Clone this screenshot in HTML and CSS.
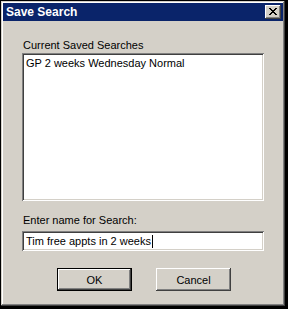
FILE: index.html
```html
<!DOCTYPE html>
<html lang="en">
<head>
    <meta charset="UTF-8">
    <title>Save Search</title>
    <link rel="stylesheet" href="styles.css">
</head>
<body>
    <div class="window">
        <div class="titlebar">
            <span class="title">Save Search</span>
            <div class="close-btn">
                <svg width="8" height="7" viewBox="0 0 8 7">
                    <path d="M0 0h2v1h1v1h2v-1h1v-1h2v1h-1v1h-1v1h-1v1h1v1h1v1h1v1h-2v-1h-1v-1h-2v1h-1v1h-2v-1h1v-1h1v-1h1v-1h-1v-1h-1v-1h-1z" fill="#000"/>
                </svg>
            </div>
        </div>
        <div class="content">
            <div class="label">Current Saved Searches</div>
            <div class="listbox">
                <div class="list-item">GP 2 weeks Wednesday Normal</div>
            </div>
            <div class="label label-name">Enter name for Search:</div>
            <div class="textbox">Tim free appts in 2 weeks<span class="caret"></span></div>
            <div class="buttons">
                <div class="btn btn-default">OK</div>
                <div class="btn">Cancel</div>
            </div>
        </div>
    </div>
</body>
</html>
```

FILE: styles.css
```css
body {
    margin: 0;
    padding: 0;
    background: #000;
    width: 288px;
    height: 309px;
    overflow: hidden;
    font-family: 'Liberation Sans', Arial, sans-serif;
    font-size: 11px;
    color: #000;
}
.window {
    margin: 1px 0 0 1px;
    width: 284px;
    height: 305px;
    box-sizing: border-box;
    padding: 2px;
    background: #d4d0c8;
    box-shadow: inset -1px -1px #404040, inset 1px 1px #d4d0c8, inset -2px -2px #808080, inset 2px 2px #ffffff;
    display: flex;
    flex-direction: column;
}
.titlebar {
    height: 18px;
    background: #0a246a;
    display: flex;
    align-items: center;
    justify-content: space-between;
    padding: 0 2px 0 3px;
}
.title {
    color: #fff;
    font-weight: bold;
    font-size: 12px;
}
.close-btn {
    width: 16px;
    height: 14px;
    box-sizing: border-box;
    background: #d4d0c8;
    box-shadow: inset -1px -1px #404040, inset 1px 1px #ffffff, inset -2px -2px #808080, inset 2px 2px #d4d0c8;
    display: flex;
    align-items: center;
    justify-content: center;
    padding: 0 1px 1px 0;
}
.close-btn svg {
    display: block;
}
.content {
    flex: 1;
    padding: 18px 19px 0 19px;
    display: flex;
    flex-direction: column;
}
.label {
    line-height: 13px;
    height: 13px;
    padding-left: 1px;
}
.listbox {
    margin-top: 1px;
    width: 242px;
    height: 148px;
    box-sizing: border-box;
    background: #fff;
    box-shadow: inset 1px 1px #808080, inset -1px -1px #ffffff, inset 2px 2px #404040, inset -2px -2px #d4d0c8;
    padding: 4px 4px;
}
.list-item {
    line-height: 13px;
}
.label-name {
    margin-top: 13px;
}
.textbox {
    margin-top: 4px;
    width: 242px;
    height: 20px;
    box-sizing: border-box;
    background: #fff;
    box-shadow: inset 1px 1px #808080, inset -1px -1px #ffffff, inset 2px 2px #404040, inset -2px -2px #d4d0c8;
    padding: 3px 4px;
    line-height: 13px;
    display: flex;
    align-items: center;
}
.caret {
    display: inline-block;
    width: 1px;
    height: 13px;
    background: #000;
    margin-left: 1px;
}
.buttons {
    margin-top: 17px;
    display: flex;
    gap: 24px;
    justify-content: center;
    padding-left: 2px;
}
.btn {
    width: 75px;
    height: 23px;
    box-sizing: border-box;
    background: #d4d0c8;
    box-shadow: inset -1px -1px #404040, inset 1px 1px #ffffff, inset -2px -2px #808080, inset 2px 2px #d4d0c8;
    display: flex;
    align-items: center;
    justify-content: center;
}
.btn-default {
    border: 1px solid #000;
}
```
